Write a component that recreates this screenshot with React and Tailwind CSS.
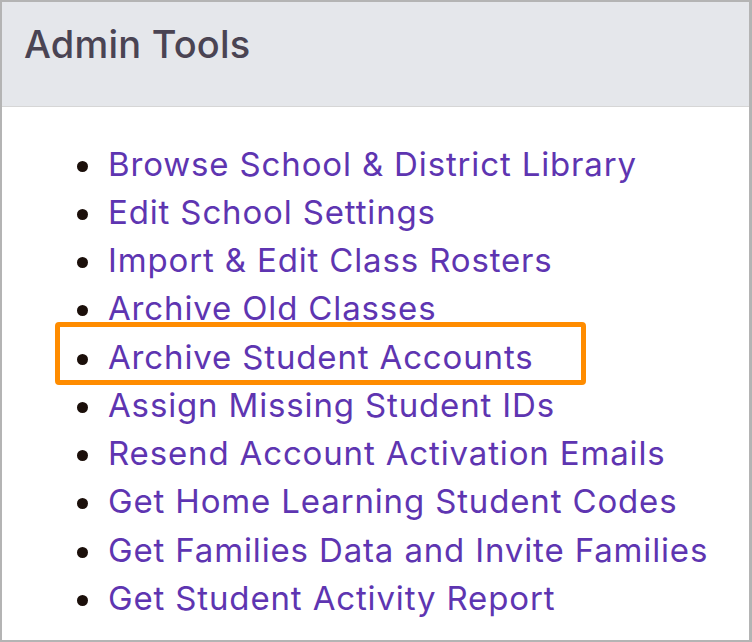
const tools = [
  "Browse School & District Library",
  "Edit School Settings",
  "Import & Edit Class Rosters",
  "Archive Old Classes",
  "Archive Student Accounts",
  "Assign Missing Student IDs",
  "Resend Account Activation Emails",
  "Get Home Learning Student Codes",
  "Get Families Data and Invite Families",
  "Get Student Activity Report",
];

export default function App() {
  return (
    <div
      className="w-[752px] h-[642px] bg-white border-t-2 border-l-2 border-b-2 border-r-[3px] border-[#b4b4b4] flex flex-col overflow-hidden"
      style={{ fontFamily: "Inter, 'Noto Sans', sans-serif" }}
    >
      <div className="h-[105px] shrink-0 bg-[#e5e7eb] border-b border-[#d6d6d6] flex items-center pl-[22px] pb-[21px]">
        <h2 className="text-[38px] font-medium text-[#4a4453] leading-none tracking-[0.2px]">Admin Tools</h2>
      </div>
      <ul className="pt-[33px] flex flex-col">
        {tools.map((t) => (
          <li key={t} className="relative flex items-center h-[48.25px]">
            <span className="ml-[75px] w-[11px] h-[11px] rounded-full bg-[#1b0f0a] shrink-0 translate-y-[2px]" />
            <a href="#" className="ml-[20px] text-[33px] text-[#5e35b1] leading-none whitespace-nowrap tracking-[0.85px]">
              {t}
            </a>
            {t === "Archive Student Accounts" && (
              <span className="absolute left-[53px] top-[-11px] w-[531px] h-[63px] border-[5px] border-[#ff8c00] rounded-[4px]" />
            )}
          </li>
        ))}
      </ul>
    </div>
  );
}
